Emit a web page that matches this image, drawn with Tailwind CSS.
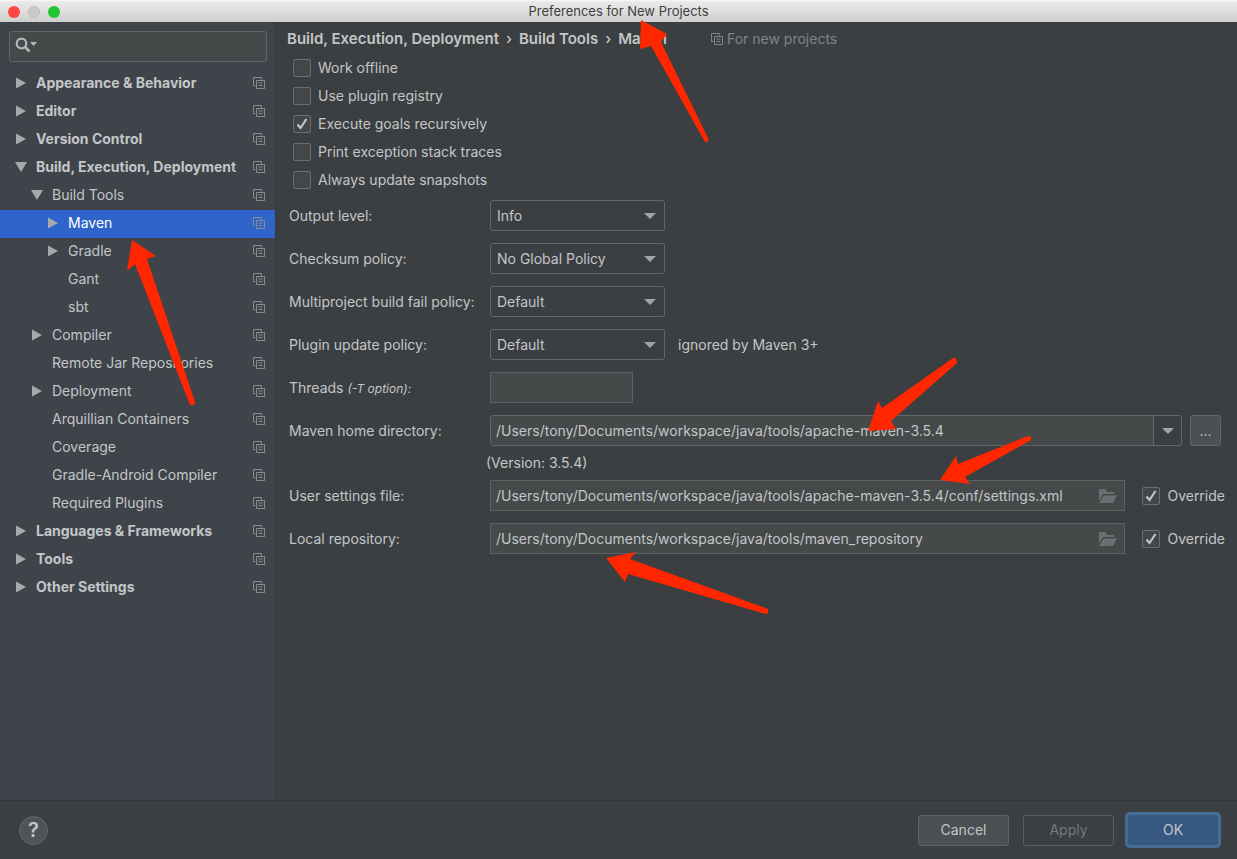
<!DOCTYPE html>
<html lang="en">
<head>
<meta charset="utf-8">
<title>Preferences for New Projects</title>
<script src="https://cdn.jsdelivr.net/npm/@tailwindcss/browser@4"></script>
</head>
<body class="relative flex min-h-screen flex-col bg-[#3c3f41] font-['Inter','Liberation_Sans',sans-serif] text-sm text-[#c3c6c8]">

<svg class="hidden" aria-hidden="true">
  <symbol id="copy" viewBox="0 0 12 12"><path d="M2.500 8.500H.5V.5h8v2M3.500 3.500h8v8h-8zM5.500 6h4M5.500 8.500h4" fill="none" stroke="currentColor"/></symbol>
  <symbol id="right" viewBox="0 0 12 12"><path d="M1 .5v11L11 6z" fill="currentColor"/></symbol>
  <symbol id="down" viewBox="0 0 12 12"><path d="M0 1h12L6 11z" fill="currentColor"/></symbol>
  <symbol id="caret" viewBox="0 0 12 6"><path d="M0 0h12L6 6z" fill="currentColor"/></symbol>
  <symbol id="tick" viewBox="0 0 18 18"><path d="M4.500 9.500l3 3.500 6-9" fill="none" stroke="currentColor" stroke-width="2.200"/></symbol>
  <symbol id="folder" viewBox="0 0 20 14"><path d="M1 0h6l2 3h7v2H5L1 11.500zM5.500 6.500H19L15 14H1z" fill="currentColor"/></symbol>
</svg>

<header class="relative flex h-[22px] shrink-0 items-center justify-center border-t border-white/80 bg-linear-to-b from-[#ebebeb] to-[#cfcfcf] text-[13px] text-[#3e3e3e]">
  <div class="absolute left-2 flex gap-2">
    <button aria-label="Close" class="size-3 rounded-full bg-[#fc4544]"></button>
    <button aria-label="Minimize" class="size-3 rounded-full border border-[#bdbdbd] bg-[#c9c9c9]"></button>
    <button aria-label="Zoom" class="size-3 rounded-full bg-[#20c52f]"></button>
  </div>
  <h1>Preferences for New Projects</h1>
</header>

<div class="flex grow">
  <aside class="w-[276px] shrink-0 border-r border-[#35383a] bg-[#3f434a] pt-[9px]">
    <div class="relative mr-2 ml-[9px]">
      <input type="search" aria-label="Search settings" class="block h-[31px] w-full rounded-[3px] border border-[#626567] bg-[#45494a] pl-9 outline-none">
      <svg class="pointer-events-none absolute top-[6px] left-[6px] h-4 w-[23px] text-[#b4b7b9]" viewBox="0 0 23 16"><circle cx="6.500" cy="6.500" r="4.800" fill="none" stroke="currentColor" stroke-width="2.200"/><path d="M10 10l4.500 4.500" stroke="currentColor" stroke-width="2.600"/><path d="M15 5h7l-3.500 4z" fill="currentColor"/></svg>
    </div>
    <ul id="tree" class="mt-2"></ul>
  </aside>

  <main class="min-w-0 grow pl-[13px]">
    <nav aria-label="Breadcrumb" class="-ml-[2px] flex h-8 items-center pt-[2px]">
      <ol class="flex items-center text-[15px] font-semibold">
        <li>Build, Execution, Deployment</li>
        <li class="w-5 text-center font-medium" aria-hidden="true">›</li>
        <li>Build Tools</li>
        <li class="w-5 text-center font-medium" aria-hidden="true">›</li>
        <li>Maven</li>
      </ol>
      <span class="ml-11 flex items-center gap-1 text-[#808486]"><svg class="size-3"><use href="#copy"/></svg>For new projects</span>
    </nav>

    <form id="settings">
      <div id="options" class="ml-1"></div>

      <div class="mt-[6px] flex flex-col gap-3">
        <div class="flex h-[31px] items-center">
          <label for="output" class="w-[201px]">Output level:</label>
          <div class="relative w-[175px]"><select id="output" class="block h-[31px] w-full appearance-none rounded-[3px] border border-[#646769] bg-[#3c3f41] pl-[6px]"><option>Info</option></select><svg class="pointer-events-none absolute top-[13px] right-[9px] h-[6px] w-3 text-[#a1a4a6]"><use href="#caret"/></svg></div>
        </div>
        <div class="flex h-[31px] items-center">
          <label for="checksum" class="w-[201px]">Checksum policy:</label>
          <div class="relative w-[175px]"><select id="checksum" class="block h-[31px] w-full appearance-none rounded-[3px] border border-[#646769] bg-[#3c3f41] pl-[6px]"><option>No Global Policy</option></select><svg class="pointer-events-none absolute top-[13px] right-[9px] h-[6px] w-3 text-[#a1a4a6]"><use href="#caret"/></svg></div>
        </div>
        <div class="flex h-[31px] items-center">
          <label for="fail" class="w-[201px] whitespace-nowrap">Multiproject build fail policy:</label>
          <div class="relative w-[175px]"><select id="fail" class="block h-[31px] w-full appearance-none rounded-[3px] border border-[#646769] bg-[#3c3f41] pl-[6px]"><option>Default</option></select><svg class="pointer-events-none absolute top-[13px] right-[9px] h-[6px] w-3 text-[#a1a4a6]"><use href="#caret"/></svg></div>
        </div>
        <div class="flex h-[31px] items-center">
          <label for="update" class="w-[201px]">Plugin update policy:</label>
          <div class="relative w-[175px]"><select id="update" class="block h-[31px] w-full appearance-none rounded-[3px] border border-[#646769] bg-[#3c3f41] pl-[6px]"><option>Default</option></select><svg class="pointer-events-none absolute top-[13px] right-[9px] h-[6px] w-3 text-[#a1a4a6]"><use href="#caret"/></svg></div>
          <span class="ml-[13px]">ignored by Maven 3+</span>
        </div>
        <div class="flex h-[31px] items-center">
          <label for="threads" class="w-[201px]">Threads <i class="text-xs">(-T option):</i></label>
          <input id="threads" type="text" class="h-[31px] w-[143px] border border-[#5e6163] bg-[#45494a] px-[5px]">
        </div>
        <div class="flex h-[31px] items-center pr-4">
          <label for="home" class="w-[201px] shrink-0">Maven home directory:</label>
          <div class="flex h-[31px] grow overflow-hidden rounded-[3px] border border-[#646769]">
            <input id="home" type="text" value="/Users/tony/Documents/workspace/java/tools/apache-maven-3.5.4" class="min-w-0 grow bg-[#45494a] px-[5px]">
            <button type="button" aria-label="Show directories" class="flex w-7 items-center justify-center border-l border-[#646769] text-[#a1a4a6]"><svg class="h-[6px] w-3"><use href="#caret"/></svg></button>
          </div>
          <button type="button" aria-label="Browse" class="ml-2 h-[31px] w-[31px] rounded-[3px] border border-[#646769] bg-[#4c5052]">...</button>
        </div>
      </div>
      <p class="ml-[197px] flex h-[34px] items-center">(Version: 3.5.4)</p>
      <div class="flex flex-col gap-3">
        <div class="flex h-[31px] items-center pr-3">
          <label for="user" class="w-[201px] shrink-0">User settings file:</label>
          <div class="flex h-[31px] min-w-0 grow items-center border border-[#5e6163] bg-[#45494a]">
            <input id="user" type="text" value="/Users/tony/Documents/workspace/java/tools/apache-maven-3.5.4/conf/settings.xml" class="h-full min-w-0 grow bg-transparent px-[5px]">
            <button type="button" aria-label="Browse settings file" class="mr-[6px] text-[#6b6f71]"><svg class="h-[14px] w-5"><use href="#folder"/></svg></button>
          </div>
          <label class="ml-[17px] flex items-center gap-[7px]"><span class="relative size-[18px]"><input type="checkbox" checked class="peer block size-[18px] appearance-none rounded-[2px] border border-[#6b6e70] bg-[#43474a]"><svg class="pointer-events-none absolute inset-0 hidden size-[18px] peer-checked:block"><use href="#tick"/></svg></span>Override</label>
        </div>
        <div class="flex h-[31px] items-center pr-3">
          <label for="repo" class="w-[201px] shrink-0">Local repository:</label>
          <div class="flex h-[31px] min-w-0 grow items-center border border-[#5e6163] bg-[#45494a]">
            <input id="repo" type="text" value="/Users/tony/Documents/workspace/java/tools/maven_repository" class="h-full min-w-0 grow bg-transparent px-[5px]">
            <button type="button" aria-label="Browse repository" class="mr-[6px] text-[#6b6f71]"><svg class="h-[14px] w-5"><use href="#folder"/></svg></button>
          </div>
          <label class="ml-[17px] flex items-center gap-[7px]"><span class="relative size-[18px]"><input type="checkbox" checked class="peer block size-[18px] appearance-none rounded-[2px] border border-[#6b6e70] bg-[#43474a]"><svg class="pointer-events-none absolute inset-0 hidden size-[18px] peer-checked:block"><use href="#tick"/></svg></span>Override</label>
        </div>
      </div>
    </form>
  </main>
</div>

<footer class="flex h-[59px] shrink-0 items-center border-t border-[#323537] pr-4 pl-[19px]">
  <button aria-label="Help" class="size-[29px] rounded-full border border-[#64686a] bg-[#505456] text-xl leading-none font-semibold">?</button>
  <div class="ml-auto flex items-center gap-[14px]">
    <button class="h-[31px] w-[91px] rounded-[3px] border border-[#5f6365] bg-[#4c5052]">Cancel</button>
    <button disabled class="h-[31px] w-[91px] rounded-[3px] border border-[#5b5e60] text-[#76797b]">Apply</button>
    <button form="settings" type="button" class="-ml-[3px] h-9 w-24 rounded-[5px] border-[3px] border-[#466d94] bg-[#365880]">OK</button>
  </div>
</footer>

<svg class="pointer-events-none absolute top-0 left-0 h-[859px] w-[1237px] fill-[#ff2600]" viewBox="0 0 1237 859" aria-hidden="true">
  <path d="M641 20L667 34L661 42L708 138Q710 142 705 142L651 46L640 49Z"/>
  <path d="M132 240L156 256L147 259L195 402Q195 406 190 405L135 264L127 271Z"/>
  <path d="M868 431L878 401L882 408L953 358Q957 357 957 363L891 421L896 429Z"/>
  <path d="M940 480L956 456L958 464L1028 436Q1032 436 1031 440L965 477L970 484Z"/>
  <path d="M606 558L636 552L630 559L768 609Q769 614 766 614L628 574L625 582Z"/>
</svg>

<script>
  // [label, depth, arrow]
  const rows = [
    ['Appearance &amp; Behavior', 0, 'right'], ['Editor', 0, 'right'], ['Version Control', 0, 'right'],
    ['Build, Execution, Deployment', 0, 'down'], ['Build Tools', 1, 'down'], ['Maven', 2, 'right'],
    ['Gradle', 2, 'right'], ['Gant', 2, ''], ['sbt', 2, ''], ['Compiler', 1, 'right'],
    ['Remote Jar Repositories', 1, ''], ['Deployment', 1, 'right'], ['Arquillian Containers', 1, ''],
    ['Coverage', 1, ''], ['Gradle-Android Compiler', 1, ''], ['Required Plugins', 1, ''],
    ['Languages &amp; Frameworks', 0, 'right'], ['Tools', 0, 'right'], ['Other Settings', 0, 'right'],
  ];
  const depths = ['pl-[15px] font-bold', 'pl-[31px]', 'pl-[47px]'];
  document.getElementById('tree').innerHTML = rows.map(([label, depth, arrow]) => `
    <li><button class="flex h-7 w-full items-center pr-[10px] pb-[2px] text-left whitespace-nowrap ${depths[depth]} ${label === 'Maven' ? 'bg-[#2f65ca] text-white' : ''}">
      <svg class="mr-[9px] size-3 shrink-0 text-[#a6a9ac]">${arrow ? `<use href="#${arrow}"/>` : ''}</svg>
      <span class="grow">${label}</span>
      <svg class="size-3 shrink-0 text-[#888c90]"><use href="#copy"/></svg>
    </button></li>`).join('');

  const options = [['Work offline', 0], ['Use plugin registry', 0], ['Execute goals recursively', 1], ['Print exception stack traces', 0], ['Always update snapshots', 0]];
  document.getElementById('options').innerHTML = options.map(([label, on]) => `
    <label class="flex h-7 items-center gap-[7px]"><span class="relative size-[18px]"><input type="checkbox" ${on ? 'checked' : ''} class="peer block size-[18px] appearance-none rounded-[2px] border border-[#6b6e70] bg-[#43474a]"><svg class="pointer-events-none absolute inset-0 hidden size-[18px] peer-checked:block"><use href="#tick"/></svg></span>${label}</label>`).join('');
</script>
</body>
</html>
